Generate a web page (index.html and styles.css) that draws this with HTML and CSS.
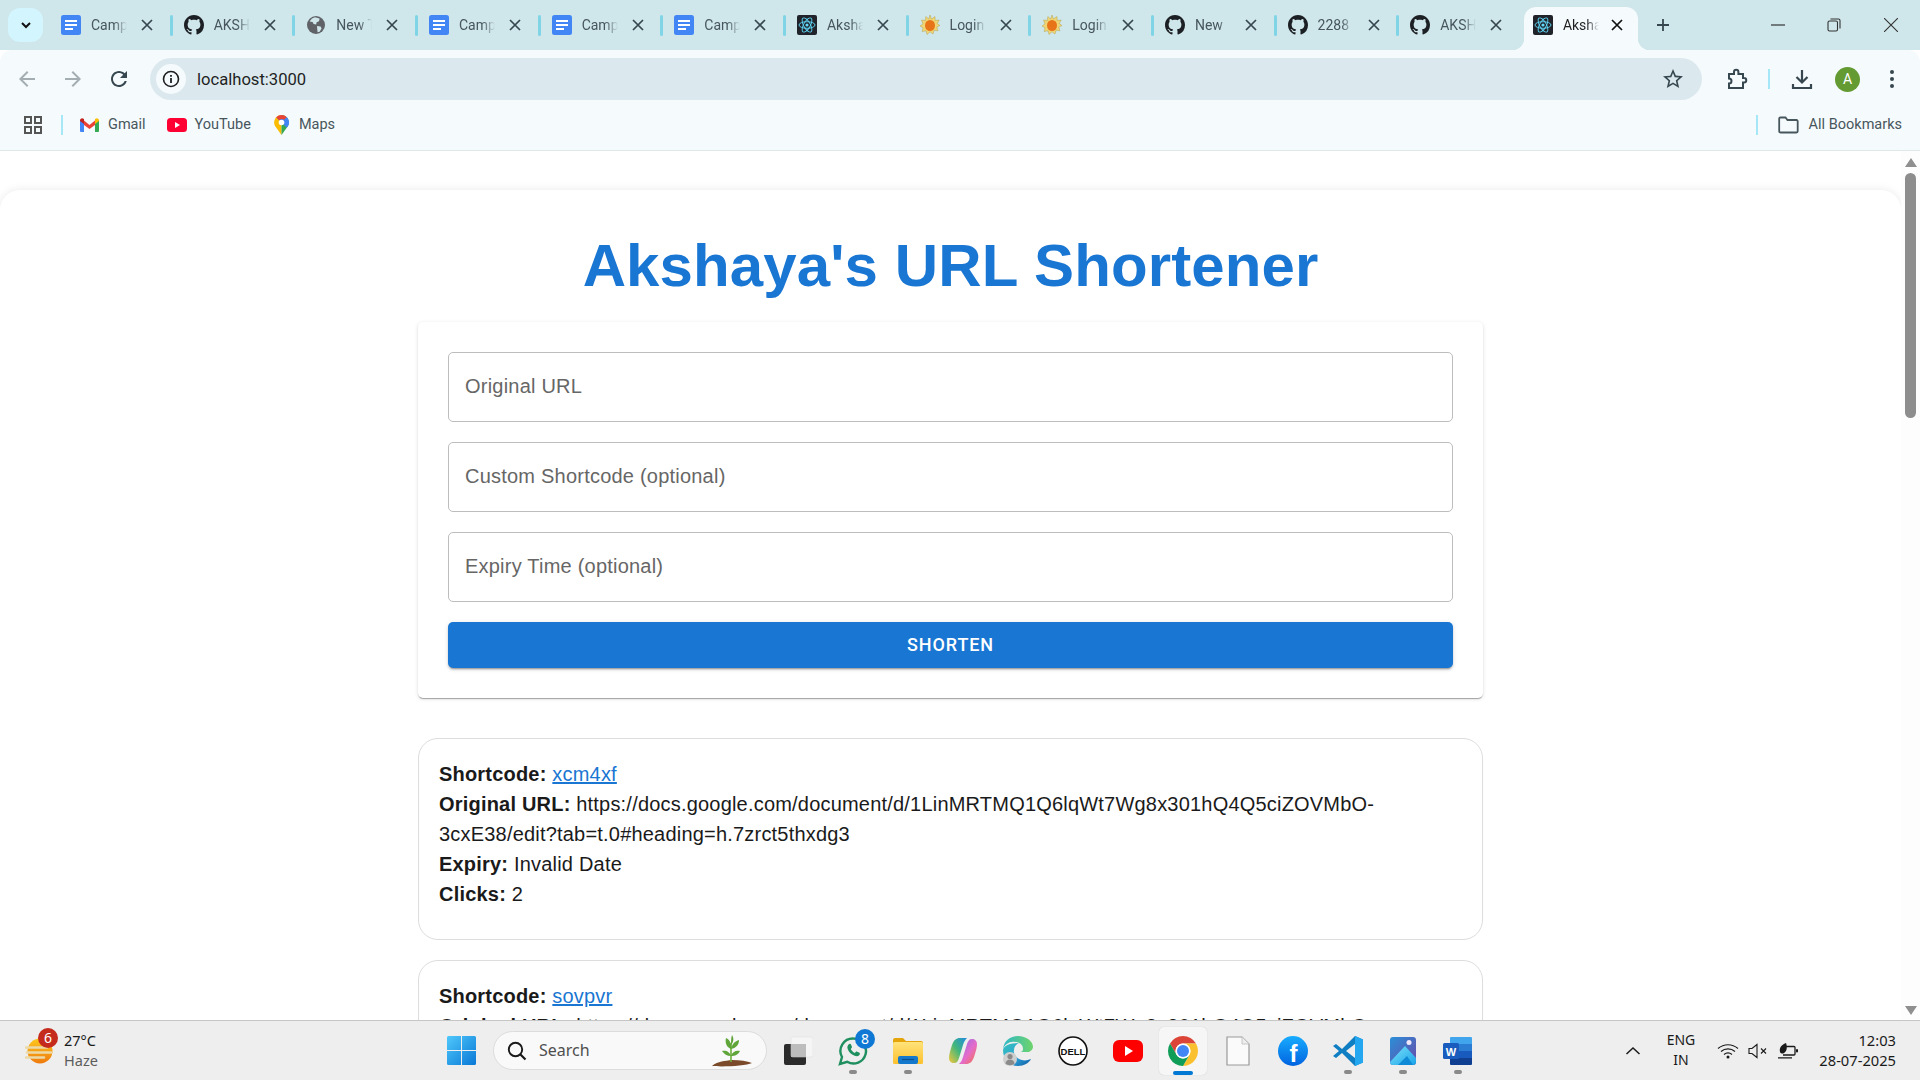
FILE: index.html
```html
<!DOCTYPE html>
<html lang="en">
<head>
<meta charset="utf-8">
<title>Akshaya's URL Shortener</title>
<link rel="stylesheet" href="styles.css">
</head>
<body>
<svg class="defs" aria-hidden="true">
  <defs>
    <linearGradient id="gWin" x1="0" y1="0" x2="1" y2="1"><stop offset="0" stop-color="#4fc8fb"/><stop offset="1" stop-color="#0a78d6"/></linearGradient>
    <linearGradient id="gFb" x1="0" y1="0" x2="0" y2="1"><stop offset="0" stop-color="#18acfe"/><stop offset="1" stop-color="#0163e0"/></linearGradient>
    <linearGradient id="gFolder" x1="0" y1="0" x2="0" y2="1"><stop offset="0" stop-color="#ffe37a"/><stop offset="1" stop-color="#fbc02d"/></linearGradient>
    <linearGradient id="gEdge" x1="0" y1="0" x2="1" y2="1"><stop offset="0" stop-color="#35c1b8"/><stop offset=".55" stop-color="#2ea3d8"/><stop offset="1" stop-color="#0c59a4"/></linearGradient>
    <linearGradient id="gEdge2" x1="0" y1="0" x2="1" y2="0"><stop offset="0" stop-color="#2fb7c8"/><stop offset="1" stop-color="#6ed46a"/></linearGradient>
    <linearGradient id="gCo1" x1="0" y1="1" x2="1" y2="0"><stop offset="0" stop-color="#f5c73a"/><stop offset=".5" stop-color="#43b77a"/><stop offset="1" stop-color="#1f8be0"/></linearGradient>
    <linearGradient id="gCo2" x1="0" y1="0" x2="1" y2="1"><stop offset="0" stop-color="#8a6be8"/><stop offset=".55" stop-color="#e46ccb"/><stop offset="1" stop-color="#f3713f"/></linearGradient>
    <linearGradient id="gPhoto" x1="0" y1="0" x2="1" y2="1"><stop offset="0" stop-color="#2a8fd8"/><stop offset="1" stop-color="#6a4aa8"/></linearGradient>
    <linearGradient id="gMount" x1="0" y1="0" x2="1" y2="1"><stop offset="0" stop-color="#7ce2fa"/><stop offset="1" stop-color="#1aa3e8"/></linearGradient>
    <linearGradient id="gSun" x1="0" y1="0" x2="0" y2="1"><stop offset="0" stop-color="#fdc81e"/><stop offset="1" stop-color="#ef7a0e"/></linearGradient>
    <symbol id="i-docs" viewBox="0 0 20 20"><rect width="20" height="20" rx="2.5" fill="#4285f4"/><path d="M4 5h12v2H4zM4 9h12v2H4zM4 13h8v2H4z" fill="#fff"/></symbol>
    <symbol id="i-gh" viewBox="0 0 16 16"><path fill="#1c2024" fill-rule="evenodd" d="M8 0C3.58 0 0 3.58 0 8c0 3.54 2.29 6.53 5.47 7.59.4.07.55-.17.55-.38 0-.19-.01-.82-.01-1.49-2.01.37-2.53-.49-2.69-.94-.09-.23-.48-.94-.82-1.13-.28-.15-.68-.52-.01-.53.63-.01 1.08.58 1.23.82.72 1.21 1.87.87 2.33.66.07-.52.28-.87.51-1.07-1.78-.2-3.64-.89-3.64-3.95 0-.87.31-1.59.82-2.15-.08-.2-.36-1.02.08-2.12 0 0 .67-.21 2.2.82.64-.18 1.32-.27 2-.27.68 0 1.36.09 2 .27 1.53-1.04 2.2-.82 2.2-.82.44 1.1.16 1.92.08 2.12.51.56.82 1.27.82 2.15 0 3.07-1.87 3.75-3.65 3.95.29.25.54.73.54 1.48 0 1.07-.01 1.93-.01 2.2 0 .21.15.46.55.38A8.013 8.013 0 0016 8c0-4.42-3.58-8-8-8z"/></symbol>
    <symbol id="i-globe" viewBox="0 0 20 20"><circle cx="10" cy="10" r="9" fill="#5f6368"/><path d="M9 2.2 6 3.6 3.6 6.4l3 .6 1 2 2.6.6.4-2.4L13 6.2l.6-2.6zM11 11l3.6.4 1 2.2-2 3.2-2 .4-.4-3.4z" fill="#cfe6eb"/></symbol>
    <symbol id="i-react" viewBox="0 0 20 20"><rect width="20" height="20" rx="2" fill="#20232a"/><g fill="none" stroke="#61dafb" stroke-width=".9"><ellipse cx="10" cy="10" rx="8" ry="3.3"/><ellipse cx="10" cy="10" rx="8" ry="3.3" transform="rotate(60 10 10)"/><ellipse cx="10" cy="10" rx="8" ry="3.3" transform="rotate(120 10 10)"/></g><circle cx="10" cy="10" r="1.6" fill="#61dafb"/></symbol>
    <symbol id="i-sun" viewBox="0 0 20 20"><path d="M10 0l1.500 4L15 1.500l.2 4 4-.5-2 3.500 2.800 2-3.200 1.500 1.200 3.800-3.800-.6L13 19l-3-2.200L7 19.500l-1-3.700-3.800.8.800-3.800L0 11l3-2L1.500 5l3.800.5L5.800 1.500l3 2.500z" fill="#efd573" stroke="#a8943c" stroke-width=".4"/><ellipse cx="10" cy="10.500" rx="5" ry="5.600" fill="#e8741a"/></symbol>
    <symbol id="i-x" viewBox="0 0 14 14"><path d="M2 2l10 10M12 2 2 12" stroke="currentColor" stroke-width="1.700" fill="none"/></symbol>
    <symbol id="i-wa" viewBox="0 0 30 30"><path d="M15.500 2.500a12.500 12.500 0 1 1-6.300 23.300L2 28l2-7A12.500 12.500 0 0 1 15.500 2.500z" fill="none" stroke="#1f8f5f" stroke-width="2.400"/><path d="M10.500 8.500c1-1 2.200-.8 2.600.2l.8 2c.2.500 0 1-.4 1.400l-.7.800c.8 1.700 2.200 3.100 4 4l.9-.9c.4-.4.900-.5 1.400-.3l2 .9c.9.4 1.100 1.500.3 2.400-1.100 1.200-2.800 1.600-4.800.8-3.500-1.400-6-4-7-7.100-.5-1.500-.1-3 .9-4.200z" fill="#1f8f5f"/></symbol>
  </defs>
</svg>

<header class="tabstrip">
  <button class="tab-list" type="button"><svg class="ic12" viewBox="0 0 12 12"><path d="M2 4l4 4 4-4" fill="none" stroke="#111" stroke-width="2"/></svg></button>
  <div class="tab"><svg class="favicon"><use href="#i-docs"/></svg><span class="tab-title">Campus</span><svg class="tab-x"><use href="#i-x"/></svg><i class="tab-sep"></i></div>
  <div class="tab"><svg class="favicon"><use href="#i-gh"/></svg><span class="tab-title">AKSHAYA</span><svg class="tab-x"><use href="#i-x"/></svg><i class="tab-sep"></i></div>
  <div class="tab"><svg class="favicon"><use href="#i-globe"/></svg><span class="tab-title">New Tab</span><svg class="tab-x"><use href="#i-x"/></svg><i class="tab-sep"></i></div>
  <div class="tab"><svg class="favicon"><use href="#i-docs"/></svg><span class="tab-title">Campus</span><svg class="tab-x"><use href="#i-x"/></svg><i class="tab-sep"></i></div>
  <div class="tab"><svg class="favicon"><use href="#i-docs"/></svg><span class="tab-title">Campus</span><svg class="tab-x"><use href="#i-x"/></svg><i class="tab-sep"></i></div>
  <div class="tab"><svg class="favicon"><use href="#i-docs"/></svg><span class="tab-title">Campus</span><svg class="tab-x"><use href="#i-x"/></svg><i class="tab-sep"></i></div>
  <div class="tab"><svg class="favicon"><use href="#i-react"/></svg><span class="tab-title">Akshaya</span><svg class="tab-x"><use href="#i-x"/></svg><i class="tab-sep"></i></div>
  <div class="tab"><svg class="favicon"><use href="#i-sun"/></svg><span class="tab-title">Login</span><svg class="tab-x"><use href="#i-x"/></svg><i class="tab-sep"></i></div>
  <div class="tab"><svg class="favicon"><use href="#i-sun"/></svg><span class="tab-title">Login</span><svg class="tab-x"><use href="#i-x"/></svg><i class="tab-sep"></i></div>
  <div class="tab"><svg class="favicon"><use href="#i-gh"/></svg><span class="tab-title">New</span><svg class="tab-x"><use href="#i-x"/></svg><i class="tab-sep"></i></div>
  <div class="tab"><svg class="favicon"><use href="#i-gh"/></svg><span class="tab-title">2288</span><svg class="tab-x"><use href="#i-x"/></svg><i class="tab-sep"></i></div>
  <div class="tab"><svg class="favicon"><use href="#i-gh"/></svg><span class="tab-title">AKSHAYA</span><svg class="tab-x"><use href="#i-x"/></svg></div>
  <div class="tab tab-active"><svg class="favicon"><use href="#i-react"/></svg><span class="tab-title">Akshaya</span><svg class="tab-x"><use href="#i-x"/></svg></div>
  <svg class="new-tab" viewBox="0 0 16 16"><path d="M8 2v12M2 8h12" stroke="#37474f" stroke-width="1.800" fill="none"/></svg>
  <div class="win-controls">
    <span class="win-btn"><svg class="ic14" viewBox="0 0 14 14"><path d="M0 7h14" stroke="#333" stroke-width="1.200"/></svg></span>
    <span class="win-btn"><svg class="ic14" viewBox="0 0 14 14"><rect x="1" y="3" width="9.500" height="10" rx="1.500" fill="none" stroke="#333" stroke-width="1.100"/><path d="M3.500 1h8a1.500 1.500 0 0 1 1.500 1.500v8" fill="none" stroke="#333" stroke-width="1.100"/></svg></span>
    <span class="win-btn win-close"><svg class="ic14" viewBox="0 0 14 14"><path d="M0 0l14 14M14 0 0 14" stroke="#333" stroke-width="1.100"/></svg></span>
  </div>
</header>

<nav class="toolbar">
  <svg class="nav-btn" viewBox="0 0 24 24"><path fill="#a4adb1" d="M20 11H7.830l5.590-5.590L12 4l-8 8 8 8 1.410-1.410L7.830 13H20v-2z"/></svg>
  <svg class="nav-btn" viewBox="0 0 24 24"><path fill="#a4adb1" d="M12 4l-1.410 1.410L16.170 11H4v2h12.170l-5.580 5.590L12 20l8-8z"/></svg>
  <svg class="nav-btn" viewBox="0 0 24 24"><path fill="#37474f" d="M17.650 6.350C16.200 4.900 14.210 4 12 4c-4.420 0-7.990 3.580-7.990 8s3.570 8 7.990 8c3.730 0 6.840-2.550 7.730-6h-2.080c-.82 2.330-3.040 4-5.650 4-3.310 0-6-2.690-6-6s2.690-6 6-6c1.660 0 3.140.69 4.220 1.780L13 11h7V4l-2.350 2.350z"/></svg>
  <div class="omnibox">
    <span class="info-chip"><svg class="ic18" viewBox="0 0 18 18"><circle cx="9" cy="9" r="7.500" fill="none" stroke="#1f1f1f" stroke-width="1.600"/><path d="M9 8v5M9 5v1.800" stroke="#1f1f1f" stroke-width="1.800"/></svg></span>
    <span class="url">localhost:3000</span>
    <svg class="star" viewBox="0 0 24 24"><path fill="#37474f" d="M22 9.240l-7.190-.62L12 2 9.190 8.630 2 9.240l5.460 4.730L5.820 21 12 17.270 18.180 21l-1.630-7.030L22 9.240zM12 15.400l-3.760 2.270 1-4.280-3.320-2.880 4.380-.38L12 6.100l1.710 4.040 4.380.38-3.320 2.880 1 4.280L12 15.400z"/></svg>
  </div>
  <svg class="tool ext" viewBox="0 0 24 24"><path fill="none" stroke="#37474f" stroke-width="2" d="M5 21v-4.500a2.500 2.500 0 0 0 0-5V7h5V5a2.200 2.200 0 0 1 4.400 0v2H19v4h1a2 2 0 0 1 0 4.500h-1V21z"/></svg>
  <i class="bar-sep tool-sep"></i>
  <svg class="tool dl" viewBox="0 0 24 24"><path fill="none" stroke="#37474f" stroke-width="2.200" d="M12 3v12M6.500 10l5.500 5.500 5.500-5.500M3 17v4h18v-4"/></svg>
  <span class="avatar">A</span>
  <svg class="tool dots" viewBox="0 0 24 24"><circle cx="12" cy="5" r="2" fill="#37474f"/><circle cx="12" cy="12" r="2" fill="#37474f"/><circle cx="12" cy="19" r="2" fill="#37474f"/></svg>
</nav>

<nav class="bookmarks">
  <svg class="apps" viewBox="0 0 18 18"><g fill="none" stroke="#555" stroke-width="2"><rect x="1" y="1" width="6" height="6"/><rect x="11" y="1" width="6" height="6"/><rect x="1" y="11" width="6" height="6"/><rect x="11" y="11" width="6" height="6"/></g></svg>
  <i class="bar-sep bm-sep"></i>
  <svg class="bm-gmail" viewBox="0 0 19 14"><path d="M0 2v11a1 1 0 0 0 1 1h3V5z" fill="#4285f4"/><path d="M15 5v9h3a1 1 0 0 0 1-1V2z" fill="#34a853"/><path d="M4 7V2.500L9.500 7 15 2.500V7L9.500 11z" fill="#ea4335"/><path d="M0 2.500C0 .5 2 -.5 3.500 .7L4 1v5L0 3z" fill="#c5221f"/><path d="M19 2.500c0-2-2-3-3.500-1.800L15 1v5l4-3z" fill="#fbbc04"/></svg>
  <span class="bm-label bm-gmail-label">Gmail</span>
  <svg class="bm-yt" viewBox="0 0 20 14"><rect width="20" height="14" rx="3.500" fill="#ff0033"/><path d="M8 4l5 3-5 3z" fill="#fff"/></svg>
  <span class="bm-label bm-yt-label">YouTube</span>
  <svg class="bm-maps" viewBox="0 0 15 20"><path d="M7.500 0A7.500 7.500 0 0 0 1 11l6.500 9z" fill="#fbbc04"/><path d="M7.500 0a7.500 7.500 0 0 1 6.500 11L7.500 20z" fill="#34a853"/><path d="M2.200 2.200 12.800 12.800 14 11A7.500 7.500 0 0 0 12.800 2.200z" fill="#4285f4"/><path d="M7.500 0A7.500 7.500 0 0 0 2.200 2.200l3 3A3.200 3.200 0 0 1 10 4.800l2.800-2.600A7.500 7.500 0 0 0 7.500 0z" fill="#ea4335"/><circle cx="7.500" cy="7.500" r="2.800" fill="#fff"/></svg>
  <span class="bm-label bm-maps-label">Maps</span>
  <div class="all-bm">
    <i class="bar-sep"></i>
    <svg class="bm-folder" viewBox="0 0 21 18"><path d="M1.200 2.500a1 1 0 0 1 1-1h5.300l2 2.500h9a1.200 1.200 0 0 1 1.200 1.200v10.100a1.200 1.200 0 0 1-1.200 1.200H2.400a1.200 1.200 0 0 1-1.200-1.200z" fill="none" stroke="#47565c" stroke-width="1.800"/></svg>
    <span class="bm-label">All Bookmarks</span>
  </div>
</nav>

<div class="viewport">
  <main class="page">
    <section class="sheet">
      <h1 class="title">Akshaya's URL Shortener</h1>
      <form class="form-card">
        <input class="field" type="text" placeholder="Original URL">
        <input class="field" type="text" placeholder="Custom Shortcode (optional)">
        <input class="field" type="text" placeholder="Expiry Time (optional)">
        <button class="shorten" type="button">SHORTEN</button>
      </form>
      <article class="result">
        <div><b>Shortcode:</b> <a href="#">xcm4xf</a></div>
        <div><b>Original URL:</b> https://docs.google.com/document/d/1LinMRTMQ1Q6lqWt7Wg8x301hQ4Q5ciZOVMbO-3cxE38/edit?tab=t.0#heading=h.7zrct5thxdg3</div>
        <div><b>Expiry:</b> Invalid Date</div>
        <div><b>Clicks:</b> 2</div>
      </article>
      <article class="result">
        <div><b>Shortcode:</b> <a href="#">sovpvr</a></div>
        <div><b>Original URL:</b> https://docs.google.com/document/d/1LinMRTMQ1Q6lqWt7Wg8x301hQ4Q5ciZOVMbO-3cxE38/edit?tab=t.0#heading=h.7zrct5thxdg3</div>
      </article>
    </section>
  </main>
  <aside class="scrollbar">
    <i class="arrow-up"></i>
    <i class="thumb"></i>
    <i class="arrow-down"></i>
  </aside>
</div>

<footer class="taskbar">
  <div class="weather">
    <span class="weather-icon">
      <svg class="ic28" viewBox="0 0 28 28"><circle cx="15" cy="14" r="12.500" fill="url(#gSun)"/><path d="M0 10.500h22M2 15.500h24M1 20.500h18" stroke="#ecd9a8" stroke-width="2.600" stroke-linecap="round"/></svg>
      <b class="weather-badge">6</b>
    </span>
    <span class="weather-text"><span class="temp">27°C</span><span class="cond">Haze</span></span>
  </div>
  <svg class="start" viewBox="0 0 29 29"><path fill="url(#gWin)" d="M0 1.500A1.500 1.500 0 0 1 1.500 0H14v14H0zM15 0h12.500A1.500 1.500 0 0 1 29 1.500V14H15zM0 15h14v14H1.500A1.500 1.500 0 0 1 0 27.500zM15 15h14v12.500a1.500 1.500 0 0 1-1.500 1.500H15z"/></svg>
  <div class="search">
    <svg class="ic20" viewBox="0 0 20 20"><circle cx="8.500" cy="8.500" r="6.700" fill="none" stroke="#1a1a1a" stroke-width="1.900"/><path d="M13 13l5.500 5.500" stroke="#1a1a1a" stroke-width="2.200"/></svg>
    <span class="search-label">Search</span>
    <svg class="plant" viewBox="0 0 44 32"><path d="M2 31c6-5 13-5 20-6 8 0 15 1 20 3-6 3-30 4-40 3z" fill="#7a4a2a"/><path d="M21 27V8" stroke="#6fae3a" stroke-width="1.600"/><path d="M21 14C16 12 15 7 16 3c4 2 6 6 5 11zM21 10c0-4 0-7 1-10 2 3 2 7-1 10zM21 14c1-5 4-8 8-9 0 5-3 8-8 9zM21 21c-4 0-7-2-9-5 4-1 8 1 9 5zM21 21c1-4 5-6 9-5-2 4-5 5-9 5z" fill="#5fa53a"/></svg>
  </div>
  <div class="apps-row">
    <span class="slot"><svg class="app" viewBox="0 0 30 30"><rect x="1" y="8" width="22" height="21" rx="2" fill="#2b2b2b"/><rect x="8" y="1" width="22" height="20" rx="2" fill="#f6f6f6" fill-opacity=".86" stroke="#ddd" stroke-width=".5"/><rect x="8" y="8" width="15" height="13" fill="#bdbdbd"/></svg></span>
    <span class="slot slot-open"><svg class="app" viewBox="0 0 30 30"><use href="#i-wa"/></svg><b class="app-badge">8</b></span>
    <span class="slot slot-open"><svg class="app" viewBox="0 0 30 30"><path d="M0 4a2 2 0 0 1 2-2h8l3 3h15a2 2 0 0 1 2 2v3H0z" fill="#e5a50a"/><rect y="6" width="30" height="22" rx="1.500" fill="url(#gFolder)"/><rect x="5" y="20" width="20" height="8" rx="2" fill="#1478cc"/><path d="M9 23.500h12" stroke="#0c4f8f" stroke-width="1.200"/></svg></span>
    <span class="slot"><svg class="app" viewBox="0 0 30 30"><path d="M18 28c4 0 6-2 8-7 2-6 3-10 3-13 0-3-2-5-5-5-3 0-4 2-5 5l-4 13c-.8 3-2 5-4 7z" fill="url(#gCo2)"/><path d="M12 2c-4 0-6 2-8 7-2 6-3 10-3 13 0 3 2 5 5 5 3 0 4-2 5-5l4-13c.8-3 2-5 4-7z" fill="url(#gCo1)"/></svg></span>
    <span class="slot"><svg class="app" viewBox="0 0 30 30"><path d="M15 0C7 0 1 5 0 13c2-5 7-8 12-7 5 0 8 3 8 7 0 2-1 3-3 3h9c2-1 4-3 4-5C30 5 23 0 15 0z" fill="url(#gEdge2)"/><path d="M0 14c0 9 6 16 15 16 6 0 11-3 13-7-3 1-6 2-9 1-5-1-9-5-8-10 0-3 2-6 5-7-8 0-15 2-16 7z" fill="url(#gEdge)"/><circle cx="7" cy="23" r="7" fill="#cfcfcf"/><circle cx="7" cy="20.500" r="2.600" fill="#8a8a8a"/><path d="M2.500 28c0-3 2-4.500 4.500-4.500s4.500 1.500 4.500 4.500c-2.500 1.500-6.500 1.500-9 0z" fill="#8a8a8a"/></svg></span>
    <span class="slot"><svg class="app" viewBox="0 0 30 30"><circle cx="15" cy="15" r="14" fill="#fff" stroke="#111" stroke-width="1.600"/><text class="dell-text" x="15" y="18.700" text-anchor="middle">DELL</text></svg></span>
    <span class="slot"><svg class="app" viewBox="0 0 30 30"><rect y="4" width="30" height="22" rx="6" fill="#f00"/><path d="M12 10l8 5-8 5z" fill="#fff"/></svg></span>
    <span class="slot slot-active"><span class="tile"><svg class="app" viewBox="4 4 40 40"><path fill="#db4437" d="M24 14h17.320A20 20 0 0 0 6.680 14L15.340 29A10 10 0 0 1 24 14z"/><path fill="#fbc02d" d="M41.320 14H24a10 10 0 0 1 8.660 15L24 44A20 20 0 0 0 41.320 14z"/><path fill="#0f9d58" d="M15.340 29 6.680 14A20 20 0 0 0 24 44l8.660-15a10 10 0 0 1-17.320 0z"/><circle cx="24" cy="24" r="10" fill="#fff"/><circle cx="24" cy="24" r="8" fill="#4285f4"/></svg></span></span>
    <span class="slot"><svg class="app" viewBox="0 0 30 30"><path d="M4 1h15l7 7v21H4z" fill="#fafafa" stroke="#9a9a9a" stroke-width="1.200"/><path d="M19 1v7h7" fill="#eee" stroke="#bbb" stroke-width=".8"/></svg></span>
    <span class="slot"><svg class="app" viewBox="0 0 30 30"><circle cx="15" cy="15" r="15" fill="url(#gFb)"/><text class="fb-text" x="15.500" y="25.500" text-anchor="middle">f</text></svg></span>
    <span class="slot slot-open"><svg class="app" viewBox="0 0 30 30"><path d="M22 0l8 3.500v23L22 30 9 17l-6 5-3-2 6-5-6-5 3-2 6 5z" fill="#0f7ec2"/><path d="M22 0l8 3.500v23L22 30z" fill="#22a7f0"/><path d="M22 8v14l-9-7z" fill="#eee"/></svg></span>
    <span class="slot slot-open"><svg class="app" viewBox="0 0 30 30"><rect x="2" y="1" width="26" height="28" rx="3" fill="url(#gPhoto)"/><path d="M2 26 17 10l11 12v4a3 3 0 0 1-3 3H5a3 3 0 0 1-3-3z" fill="url(#gMount)"/><path d="M10 29l9-9 6 9z" fill="#0f8ad6"/><circle cx="21" cy="6.500" r="2.500" fill="#f1e9fb"/></svg></span>
    <span class="slot slot-open"><svg class="app" viewBox="0 0 30 30"><path d="M8 1h20a1 1 0 0 1 1 1v6H7V2a1 1 0 0 1 1-1z" fill="#41a5ee"/><rect x="7" y="8" width="22" height="7" fill="#2b7cd3"/><rect x="7" y="15" width="22" height="7" fill="#185abd"/><path d="M7 22h22v6a1 1 0 0 1-1 1H8a1 1 0 0 1-1-1z" fill="#103f91"/><rect y="7" width="16" height="16" rx="1.500" fill="#1a5cbe"/><text class="word-text" x="8" y="19.500" text-anchor="middle">W</text></svg></span>
  </div>
  <div class="tray">
    <svg class="caret" viewBox="0 0 16 10"><path d="M1.500 8 8 2l6.500 6" fill="none" stroke="#1a1a1a" stroke-width="1.500"/></svg>
    <span class="lang"><span>ENG</span><span>IN</span></span>
    <svg class="tray-wifi" viewBox="0 0 22 16"><path d="M1 5.500c6-5 14-5 20 0M4 8.500c4-3.500 10-3.500 14 0M7 11.500c2.500-2 5.500-2 8 0" fill="none" stroke="#1a1a1a" stroke-width="1.100"/><circle cx="11" cy="14" r="1.500" fill="#1a1a1a"/></svg>
    <svg class="tray-mute" viewBox="0 0 20 16"><path d="M1 5.500h3L9 1.500v13L4 10.500H1z" fill="none" stroke="#1a1a1a" stroke-width="1.100"/><path d="M13 5.500l5 5M18 5.500l-5 5" stroke="#1a1a1a" stroke-width="1.100"/></svg>
    <svg class="tray-batt" viewBox="0 0 20 16"><path d="M8 0C3 2 1 5 2 9c.5 1.500 2.500 2 4 1 3-1.500 3.500-6 2-10z" fill="#1a1a1a"/><path d="M7 3.500h9a1 1 0 0 1 1 1V11a1 1 0 0 1-1 1H5M0 14.800h14" fill="none" stroke="#1a1a1a" stroke-width="1.300"/><rect x="18" y="6" width="2" height="3.500" rx="1" fill="#1a1a1a"/></svg>
    <span class="clock"><span>12:03</span><span>28-07-2025</span></span>
  </div>
</footer>
</body>
</html>
```

FILE: styles.css
```css
* { box-sizing: border-box; }
html, body { margin: 0; height: 100%; }
body {
  width: 1920px;
  height: 1080px;
  overflow: hidden;
  display: flex;
  flex-direction: column;
  font-family: Roboto, "Liberation Sans", sans-serif;
  background: #fff;
  color: #1f1f1f;
}
i { display: block; font-style: normal; }
svg { display: block; flex-shrink: 0; }
.defs { width: 0; height: 0; overflow: hidden; }
.ic12 { width: 12px; height: 12px; }
.ic14 { width: 14px; height: 14px; }
.ic18 { width: 18px; height: 18px; }
.ic20 { width: 20px; height: 20px; }
.ic28 { width: 28px; height: 28px; }

/* Tab strip */
.tabstrip {
  height: 50px;
  flex-shrink: 0;
  display: flex;
  align-items: center;
  padding-left: 8px;
  background: #cfe6eb;
}
.tab-list {
  width: 35px;
  height: 34px;
  margin: 0 6px 0 0;
  padding: 0;
  flex-shrink: 0;
  border: 0;
  border-radius: 12px;
  background: #d3f5fd;
  display: flex;
  align-items: center;
  justify-content: center;
}
.tab {
  width: 122.67px;
  height: 50px;
  flex-shrink: 0;
  display: flex;
  align-items: center;
  padding-left: 12px;
  color: #37474f;
}
.favicon { width: 20px; height: 20px; }
.tab-title {
  width: 36px;
  margin-left: 10px;
  overflow: hidden;
  white-space: nowrap;
  font-size: 14px;
  color: #46565c;
  -webkit-mask-image: linear-gradient(90deg, #000 65%, transparent 100%);
  mask-image: linear-gradient(90deg, #000 65%, transparent 100%);
}
.tab-x { width: 14px; height: 14px; margin-left: 13px; }
.tab-sep {
  width: 3px;
  height: 21px;
  margin-left: auto;
  margin-right: -1px;
  border-radius: 2px;
  background: #7fd5e5;
}
.tab-active {
  position: relative;
  width: 114px;
  height: 43px;
  margin: 7px 0 0 3px;
  padding-left: 9px;
  padding-bottom: 7px;
  border-radius: 12px 12px 0 0;
  background: #f5fafd;
  color: #111;
}
.tab-active::before,
.tab-active::after {
  content: "";
  position: absolute;
  bottom: 0;
  width: 12px;
  height: 12px;
}
.tab-active::before { left: -12px; background: radial-gradient(circle at 0 0, transparent 12px, #f5fafd 12.5px); }
.tab-active::after { right: -12px; background: radial-gradient(circle at 100% 0, transparent 12px, #f5fafd 12.5px); }
.tab-active .tab-title { color: #1f1f1f; }
.tab-active .tab-x { margin-left: 11px; }
.new-tab { width: 16px; height: 16px; margin-left: 17px; }
.win-controls { margin-left: auto; display: flex; align-self: stretch; }
.win-btn { width: 56px; display: flex; align-items: center; justify-content: center; }
.win-close { width: 58px; }

/* Toolbar */
.toolbar {
  height: 50px;
  flex-shrink: 0;
  display: flex;
  align-items: center;
  padding: 8px 0 0 15px;
  background: #f5fafd;
  border-radius: 12px 12px 0 0;
}
.nav-btn { width: 24px; height: 24px; margin-right: 22px; }
.omnibox {
  width: 1552px;
  height: 42px;
  margin-left: -3px;
  padding: 0 17px 0 6px;
  flex-shrink: 0;
  display: flex;
  align-items: center;
  border-radius: 21px;
  background: #dbe9ee;
}
.info-chip {
  width: 30px;
  height: 30px;
  border-radius: 50%;
  background: #f5fafd;
  display: flex;
  align-items: center;
  justify-content: center;
}
.url { margin-left: 11px; font-size: 16.6px; color: #1f1f1f; }
.star { width: 24px; height: 24px; margin-left: auto; }
.tool { width: 24px; height: 24px; }
.ext { margin-left: 22px; }
.bar-sep { width: 2px; height: 20px; background: #a6e7f7; }
.tool-sep { margin-left: 20px; }
.dl { margin-left: 20px; }
.avatar {
  width: 25px;
  height: 25px;
  margin-left: 21px;
  border-radius: 50%;
  background: #649a32;
  color: #fff;
  font-size: 14px;
  display: flex;
  align-items: center;
  justify-content: center;
}
.dots { margin-left: 20px; }

/* Bookmarks */
.bookmarks {
  height: 51px;
  flex-shrink: 0;
  display: flex;
  align-items: center;
  padding: 0 18px 1px 24px;
  background: #f5fafd;
  border-bottom: 1px solid #dde8eb;
}
.apps { width: 18px; height: 18px; }
.bm-sep { margin-left: 19px; }
.bm-label { font-size: 14.5px; color: #47565c; white-space: nowrap; }
.bm-gmail { width: 19px; height: 14px; margin-left: 17px; }
.bm-gmail-label { margin-left: 9px; }
.bm-yt { width: 20px; height: 14px; margin-left: 21px; }
.bm-yt-label { margin-left: 8px; }
.bm-maps { width: 15px; height: 20px; margin-left: 23px; }
.bm-maps-label { margin-left: 10px; }
.all-bm { margin-left: auto; display: flex; align-items: center; }
.bm-folder { width: 21px; height: 18px; margin: 0 10px 0 20px; }

/* Viewport */
.viewport { height: 869px; flex-shrink: 0; display: flex; overflow: hidden; background: #fff; }
.page { width: 1901px; flex-shrink: 0; padding-top: 39px; background: #fff; }
.sheet {
  height: 900px;
  padding-top: 41px;
  border-radius: 20px;
  background: #fff;
  box-shadow: 0 0 10px rgba(0, 0, 0, .09);
  font-family: "Liberation Sans", Arial, sans-serif;
}
.title {
  margin: 0 0 22px;
  height: 69px;
  font-size: 60px;
  line-height: 69px;
  font-weight: 700;
  letter-spacing: .1px;
  text-align: center;
  color: #1976d2;
}
.form-card {
  width: 1065px;
  margin: 0 auto;
  padding: 30px;
  display: flex;
  flex-direction: column;
  gap: 20px;
  border-radius: 5px;
  background: #fff;
  box-shadow: 0 2px 1px -1px rgba(0,0,0,.2), 0 1px 1px rgba(0,0,0,.14), 0 1px 4px rgba(0,0,0,.12);
}
.field {
  height: 70px;
  padding: 0 16px 2px;
  border: 1px solid #bdbdbd;
  border-radius: 5px;
  outline: 0;
  background: #fff;
  font: 20px "Liberation Sans", Arial, sans-serif;
  letter-spacing: .22px;
  color: #222;
}
.field::placeholder { color: #666; opacity: 1; }
.shorten {
  height: 46px;
  padding: 0 0 2px;
  border: 0;
  border-radius: 5px;
  background: #1976d2;
  color: #fff;
  font: 500 18px Roboto, "Liberation Sans", sans-serif;
  letter-spacing: .9px;
  box-shadow: 0 3px 1px -2px rgba(0,0,0,.2), 0 2px 2px rgba(0,0,0,.14), 0 1px 5px rgba(0,0,0,.12);
}
.result {
  width: 1065px;
  height: 202px;
  margin: 40px auto -20px;
  padding: 20px 20px 0;
  border: 1px solid #ddd;
  border-radius: 20px;
  font-size: 20px;
  line-height: 30px;
  letter-spacing: .2px;
  color: #1a1a1a;
}
.result a { color: #1976d2; }

/* Scrollbar */
.scrollbar {
  width: 19px;
  flex-shrink: 0;
  padding: 7px 0 5px;
  display: flex;
  flex-direction: column;
  align-items: center;
  background: #fdfdfd;
}
.arrow-up { width: 0; height: 0; border: 6.5px solid transparent; border-top: 0; border-bottom: 9px solid #8f8f8f; }
.thumb { width: 11px; height: 245px; margin-top: 6px; border-radius: 6px; background: #8d8d8d; }
.arrow-down { width: 0; height: 0; margin-top: auto; border: 6.5px solid transparent; border-bottom: 0; border-top: 9px solid #8f8f8f; }

/* Taskbar */
.taskbar {
  height: 60px;
  flex-shrink: 0;
  display: flex;
  align-items: center;
  border-top: 1px solid #c6c6c6;
  background: #eee;
  color: #1a1a1a;
  font-family: "Noto Sans", Roboto, sans-serif;
}
.weather { width: 447px; flex-shrink: 0; padding-left: 25px; display: flex; align-items: center; }
.weather-icon { position: relative; width: 28px; height: 28px; }
.weather-badge {
  position: absolute;
  left: 13px;
  top: -9px;
  width: 20px;
  height: 20px;
  border-radius: 50%;
  background: #c42b1c;
  color: #fff;
  font-size: 14px;
  font-weight: 400;
  line-height: 20px;
  text-align: center;
}
.weather-text { margin: 0 0 2px 11px; display: flex; flex-direction: column; font-size: 14.5px; line-height: 20px; }
.cond { color: #5c5c5c; }
.start { width: 29px; height: 29px; }
.search {
  width: 274px;
  height: 39px;
  margin-left: 17px;
  padding: 0 12px 0 13px;
  display: flex;
  align-items: center;
  border: 1px solid #dcdcdc;
  border-radius: 20px;
  background: #f9f9f9;
}
.search-label { margin: 0 0 1px 12px; font-size: 16px; color: #4f4f4f; }
.plant { width: 44px; height: 32px; margin-left: auto; }
.apps-row { display: flex; margin-left: 3px; }
.slot {
  position: relative;
  width: 55px;
  height: 59px;
  display: flex;
  align-items: center;
  justify-content: center;
}
.app { width: 30px; height: 30px; }
.slot-open::after {
  content: "";
  position: absolute;
  left: 24px;
  bottom: 6px;
  width: 8px;
  height: 4px;
  border-radius: 2px;
  background: #8a8a8a;
}
.app-badge {
  position: absolute;
  left: 30px;
  top: 8px;
  width: 20px;
  height: 20px;
  border-radius: 50%;
  background: #0f78d4;
  color: #fff;
  font-size: 14px;
  font-weight: 400;
  line-height: 20px;
  text-align: center;
}
.tile {
  width: 48px;
  height: 48px;
  border-radius: 5px;
  background: #f6f6f6;
  box-shadow: 0 0 1px rgba(0,0,0,.2);
  display: flex;
  align-items: center;
  justify-content: center;
}
.slot-active::after {
  content: "";
  position: absolute;
  left: 18px;
  bottom: 5px;
  width: 20px;
  height: 4px;
  border-radius: 2px;
  background: #0078d4;
}
.dell-text { font: 700 9.500px "Liberation Sans", sans-serif; fill: #111; }
.fb-text { font: 700 24px "Liberation Sans", sans-serif; fill: #fff; }
.word-text { font: 700 11px "Liberation Sans", sans-serif; fill: #fff; }
.tray { margin-left: auto; padding-right: 24px; display: flex; align-items: center; }
.caret { width: 16px; height: 10px; }
.lang { width: 40px; margin: 0 0 2px 20px; display: flex; flex-direction: column; align-items: center; font-size: 14px; line-height: 20px; }
.tray-wifi { width: 22px; height: 16px; margin-left: 16px; }
.tray-mute { width: 20px; height: 16px; margin-left: 9px; }
.tray-batt { width: 20px; height: 16px; margin-left: 10px; }
.clock { width: 86px; margin: 0 0 2px 12px; display: flex; flex-direction: column; align-items: flex-end; font-size: 14.7px; line-height: 20px; white-space: nowrap; }
```
